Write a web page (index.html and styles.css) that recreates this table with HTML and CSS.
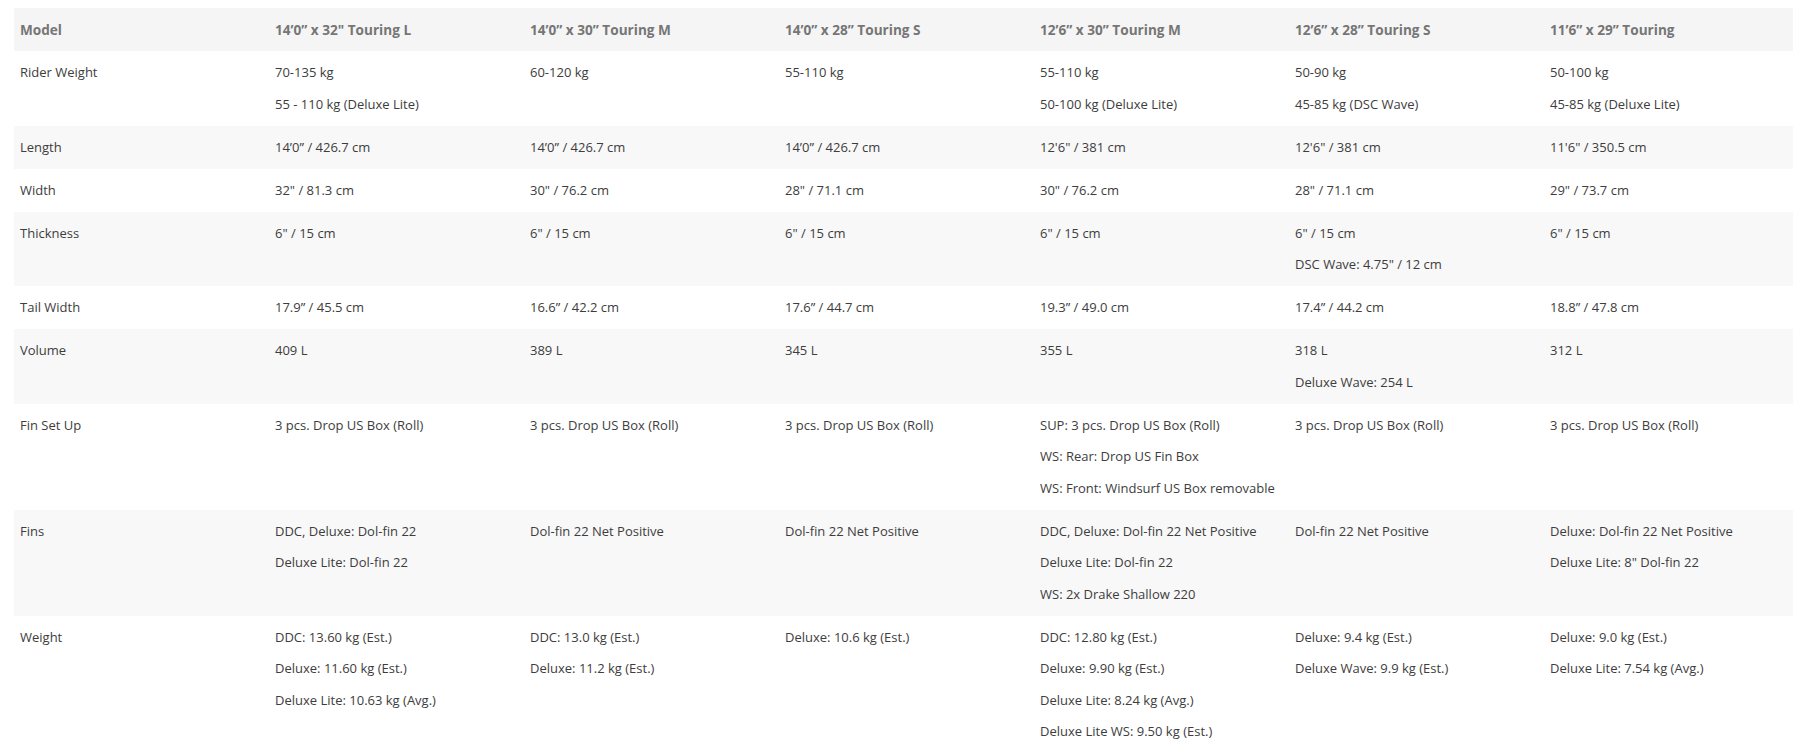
FILE: index.html
```html
<!DOCTYPE html>
<html lang="en">
<head>
<meta charset="utf-8">
<title>Touring Specs</title>
<link rel="stylesheet" href="styles.css">
</head>
<body>
<div class="wrap">
<table class="specs">
<thead>
<tr>
<th>Model</th>
<th>14’0” x 32" Touring L</th>
<th>14’0” x 30” Touring M</th>
<th>14’0” x 28” Touring S</th>
<th>12’6” x 30” Touring M</th>
<th>12’6” x 28” Touring S</th>
<th>11’6” x 29” Touring</th>
</tr>
</thead>
<tbody>
<tr>
<td><p>Rider Weight</p></td>
<td><p>70-135 kg</p><p>55 - 110 kg (Deluxe Lite)</p></td>
<td><p>60-120 kg</p></td>
<td><p>55-110 kg</p></td>
<td><p>55-110 kg</p><p>50-100 kg (Deluxe Lite)</p></td>
<td><p>50-90 kg</p><p>45-85 kg (DSC Wave)</p></td>
<td><p>50-100 kg</p><p>45-85 kg (Deluxe Lite)</p></td>
</tr>
<tr>
<td><p>Length</p></td>
<td><p>14’0” / 426.7 cm</p></td>
<td><p>14’0” / 426.7 cm</p></td>
<td><p>14’0” / 426.7 cm</p></td>
<td><p>12'6" / 381 cm</p></td>
<td><p>12'6" / 381 cm</p></td>
<td><p>11'6" / 350.5 cm</p></td>
</tr>
<tr>
<td><p>Width</p></td>
<td><p>32" / 81.3 cm</p></td>
<td><p>30" / 76.2 cm</p></td>
<td><p>28" / 71.1 cm</p></td>
<td><p>30" / 76.2 cm</p></td>
<td><p>28" / 71.1 cm</p></td>
<td><p>29" / 73.7 cm</p></td>
</tr>
<tr>
<td><p>Thickness</p></td>
<td><p>6" / 15 cm</p></td>
<td><p>6" / 15 cm</p></td>
<td><p>6" / 15 cm</p></td>
<td><p>6" / 15 cm</p></td>
<td><p>6" / 15 cm</p><p>DSC Wave: 4.75" / 12 cm</p></td>
<td><p>6" / 15 cm</p></td>
</tr>
<tr>
<td><p>Tail Width</p></td>
<td><p>17.9” / 45.5 cm</p></td>
<td><p>16.6” / 42.2 cm</p></td>
<td><p>17.6” / 44.7 cm</p></td>
<td><p>19.3” / 49.0 cm</p></td>
<td><p>17.4” / 44.2 cm</p></td>
<td><p>18.8” / 47.8 cm</p></td>
</tr>
<tr>
<td><p>Volume</p></td>
<td><p>409 L</p></td>
<td><p>389 L</p></td>
<td><p>345 L</p></td>
<td><p>355 L</p></td>
<td><p>318 L</p><p>Deluxe Wave: 254 L</p></td>
<td><p>312 L</p></td>
</tr>
<tr>
<td><p>Fin Set Up</p></td>
<td><p>3 pcs. Drop US Box (Roll)</p></td>
<td><p>3 pcs. Drop US Box (Roll)</p></td>
<td><p>3 pcs. Drop US Box (Roll)</p></td>
<td><p>SUP: 3 pcs. Drop US Box (Roll)</p><p>WS: Rear: Drop US Fin Box</p><p>WS: Front: Windsurf US Box removable</p></td>
<td><p>3 pcs. Drop US Box (Roll)</p></td>
<td><p>3 pcs. Drop US Box (Roll)</p></td>
</tr>
<tr>
<td><p>Fins</p></td>
<td><p>DDC, Deluxe: Dol-fin 22</p><p>Deluxe Lite: Dol-fin 22</p></td>
<td><p>Dol-fin 22 Net Positive</p></td>
<td><p>Dol-fin 22 Net Positive</p></td>
<td><p>DDC, Deluxe: Dol-fin 22 Net Positive</p><p>Deluxe Lite: Dol-fin 22</p><p>WS: 2x Drake Shallow 220</p></td>
<td><p>Dol-fin 22 Net Positive</p></td>
<td><p>Deluxe: Dol-fin 22 Net Positive</p><p>Deluxe Lite: 8" Dol-fin 22</p></td>
</tr>
<tr>
<td><p>Weight</p></td>
<td><p>DDC: 13.60 kg (Est.)</p><p>Deluxe: 11.60 kg (Est.)</p><p>Deluxe Lite: 10.63 kg (Avg.)</p></td>
<td><p>DDC: 13.0 kg (Est.)</p><p>Deluxe: 11.2 kg (Est.)</p></td>
<td><p>Deluxe: 10.6 kg (Est.)</p></td>
<td><p>DDC: 12.80 kg (Est.)</p><p>Deluxe: 9.90 kg (Est.)</p><p>Deluxe Lite: 8.24 kg (Avg.)</p><p>Deluxe Lite WS: 9.50 kg (Est.)</p></td>
<td><p>Deluxe: 9.4 kg (Est.)</p><p>Deluxe Wave: 9.9 kg (Est.)</p></td>
<td><p>Deluxe: 9.0 kg (Est.)</p><p>Deluxe Lite: 7.54 kg (Avg.)</p></td>
</tr>
</tbody>
</table>
</div>
</body>
</html>
```

FILE: styles.css
```css
html, body {
  margin: 0;
  padding: 0;
  background: #ffffff;
  overflow: hidden;
}

.wrap {
  padding: 8px 0 0 14px;
  width: 1800px;
}

.specs {
  width: 1785px;
  table-layout: fixed;
  border-collapse: collapse;
  border-spacing: 0;
  font-family: "Open Sans", "Liberation Sans", sans-serif;
  font-size: 13px;
  color: #3d3d3d;
}

.specs th {
  text-align: left;
  font-weight: 700;
  font-size: 13.6px;
  color: #767676;
  background: #f5f5f5;
  padding: 11px 6px 10.5px;
  line-height: 21.5px;
  height: 43px;
  box-sizing: border-box;
  vertical-align: top;
}

.specs td {
  padding: 11px 6px 10.5px;
  vertical-align: top;
  line-height: 21.5px;
}

.specs td p {
  margin: 0 0 10px;
}

.specs td p:last-child {
  margin-bottom: 0;
}

.specs tbody tr:nth-child(even) {
  background: #f8f8f8;
}

.specs tbody tr:nth-child(odd) {
  background: #ffffff;
}
```
